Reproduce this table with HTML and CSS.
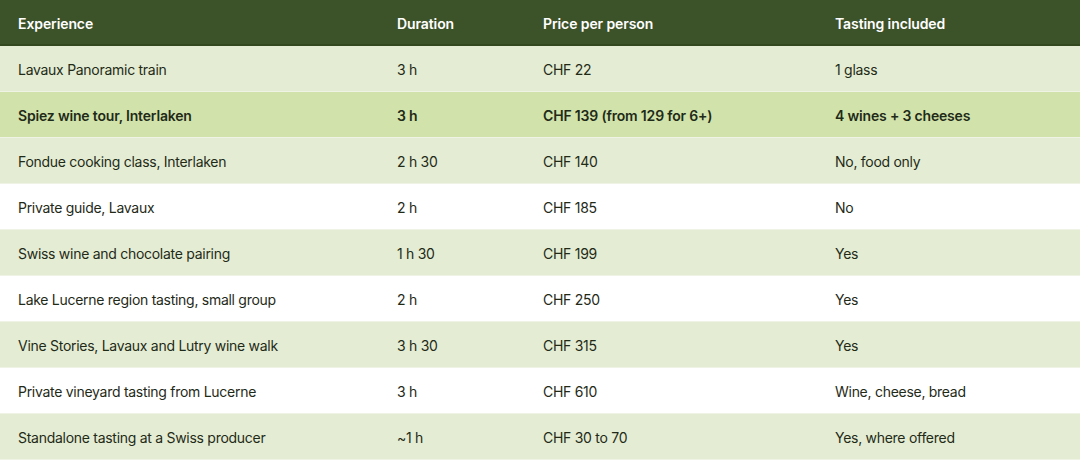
FILE: index.html
```html
<!DOCTYPE html>
<html lang="en">
<head>
<meta charset="utf-8">
<title>Swiss wine experiences</title>
<link rel="stylesheet" href="styles.css">
</head>
<body>
<table class="tours">
  <colgroup>
    <col class="c1"><col class="c2"><col class="c3"><col class="c4">
  </colgroup>
  <thead>
    <tr><th>Experience</th><th>Duration</th><th>Price per person</th><th>Tasting included</th></tr>
  </thead>
  <tbody>
    <tr><td>Lavaux Panoramic train</td><td>3 h</td><td>CHF 22</td><td>1 glass</td></tr>
    <tr class="hl"><td>Spiez wine tour, Interlaken</td><td>3 h</td><td>CHF 139 (from 129 for 6+)</td><td>4 wines + 3 cheeses</td></tr>
    <tr><td>Fondue cooking class, Interlaken</td><td>2 h 30</td><td>CHF 140</td><td>No, food only</td></tr>
    <tr><td>Private guide, Lavaux</td><td>2 h</td><td>CHF 185</td><td>No</td></tr>
    <tr><td>Swiss wine and chocolate pairing</td><td>1 h 30</td><td>CHF 199</td><td>Yes</td></tr>
    <tr><td>Lake Lucerne region tasting, small group</td><td>2 h</td><td>CHF 250</td><td>Yes</td></tr>
    <tr><td>Vine Stories, Lavaux and Lutry wine walk</td><td>3 h 30</td><td>CHF 315</td><td>Yes</td></tr>
    <tr><td>Private vineyard tasting from Lucerne</td><td>3 h</td><td>CHF 610</td><td>Wine, cheese, bread</td></tr>
    <tr><td>Standalone tasting at a Swiss producer</td><td>~1 h</td><td>CHF 30 to 70</td><td>Yes, where offered</td></tr>
  </tbody>
</table>
</body>
</html>
```
FILE: styles.css
```css
html, body {
  margin: 0;
  padding: 0;
  background: #ffffff;
}
body {
  font-family: "Inter", "Noto Sans", sans-serif;
  font-size: 14px;
  letter-spacing: -0.28px;
  color: #1f2a18;
}
.tours {
  width: 1080px;
  border-collapse: collapse;
  table-layout: fixed;
}
.c1 { width: 379px; }
.c2 { width: 146px; }
.c3 { width: 292px; }
.c4 { width: 263px; }
.tours th {
  background: #3c5229;
  color: #ffffff;
  font-weight: 600;
  letter-spacing: -0.1px;
  text-align: left;
  height: 42px;
  padding: 2px 0 0 18px;
  border-bottom: 2px solid #34481f;
}
.tours td {
  height: 43px;
  padding: 2px 0 0 18px;
  border-bottom: 1px solid #eef3e5;
  white-space: nowrap;
}
.tours tbody tr:nth-child(odd) td {
  background: #e4edd3;
}
.tours tbody tr:nth-child(even) td {
  background: #ffffff;
}
.tours tbody tr.hl td {
  background: #d1e3aa;
  font-weight: 600;
  letter-spacing: -0.18px;
}
```
